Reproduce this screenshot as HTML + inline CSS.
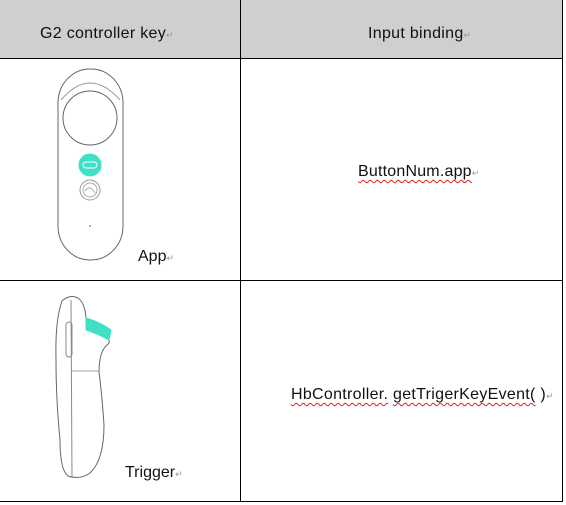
<!DOCTYPE html><html><head><style>
body{margin:0;width:566px;height:505px;background:#fff;position:relative;overflow:hidden;font-family:"Liberation Sans",sans-serif;font-size:16px;color:#111}
.a{position:absolute;white-space:nowrap}
.l{position:absolute;background:#000}
.w{text-decoration:underline wavy #e02020;text-decoration-thickness:1px;text-underline-offset:3px}
.r{color:#999;font-size:9px}
</style></head><body>
<div style="position:absolute;left:0;top:0;width:563px;height:58px;background:#d0cecf"></div>
<div class="l" style="left:240px;top:0;width:1px;height:502px"></div>
<div class="l" style="left:562px;top:0;width:1px;height:502px"></div>
<div class="l" style="left:0;top:58px;width:563px;height:1px"></div>
<div class="l" style="left:0;top:280px;width:563px;height:1px"></div>
<div class="l" style="left:0;top:501px;width:563px;height:1px"></div>
<div class="a" style="left:40px;top:25px;letter-spacing:0.3px">G2 controller key<span class="r">↵</span></div>
<div class="a" style="left:368px;top:25px;letter-spacing:0.3px">Input binding<span class="r">↵</span></div>
<div class="a" style="left:358px;top:163px;letter-spacing:0.2px"><span class="w">ButtonNum.app</span><span class="r">↵</span></div>
<div class="a" style="left:138px;top:248px">App<span class="r">↵</span></div>
<div class="a" style="left:125px;top:464px">Trigger<span class="r">↵</span></div>
<div class="a" style="left:291px;top:386px;letter-spacing:0.3px"><span class="w">HbController.</span> <span class="w">getTrigerKeyEvent(</span> )<span class="r">↵</span></div>
<svg class="a" style="left:0;top:0" width="566" height="505" fill="none" stroke="#666" stroke-width="1">
<rect x="58" y="69" width="65" height="191" rx="32" ry="34"/>
<path d="M61 100 Q90 66 120 100" stroke="#999"/>
<circle cx="90" cy="118" r="27"/>
<circle cx="90" cy="165" r="11" fill="#3fe0c5" stroke="#3fe0c5"/>
<rect x="83" y="162" width="14" height="6" rx="3" stroke="#fff"/>
<circle cx="90" cy="190" r="10" stroke="#999"/>
<circle cx="90" cy="190" r="7" stroke="#aaa"/>
<path d="M85 191 Q90 184 95 193" stroke="#aaa"/>
<circle cx="90" cy="226" r="1" fill="#999" stroke="none"/>
<path d="M62 301 Q70 294 78 298 Q85 303 86 318 L108 338 Q111 342 107 345 Q99 352 99 372 Q102 395 104 425 Q104 460 90 473 Q80 480 68 476 Q60 470 60 440 Q56 400 56 360 Q55 320 62 301 Z"/>
<path d="M86 318 Q100 322 111 330 L109 340 Q96 333 86 330 Z" fill="#3fe0c5" stroke="#3fe0c5"/>
<path d="M71 300 L72 478" stroke="#888"/>
<rect x="66" y="322" width="6" height="35" rx="3" stroke="#888"/>
<path d="M72 371 L99 371" stroke="#aaa"/>
</svg>
</body></html>
